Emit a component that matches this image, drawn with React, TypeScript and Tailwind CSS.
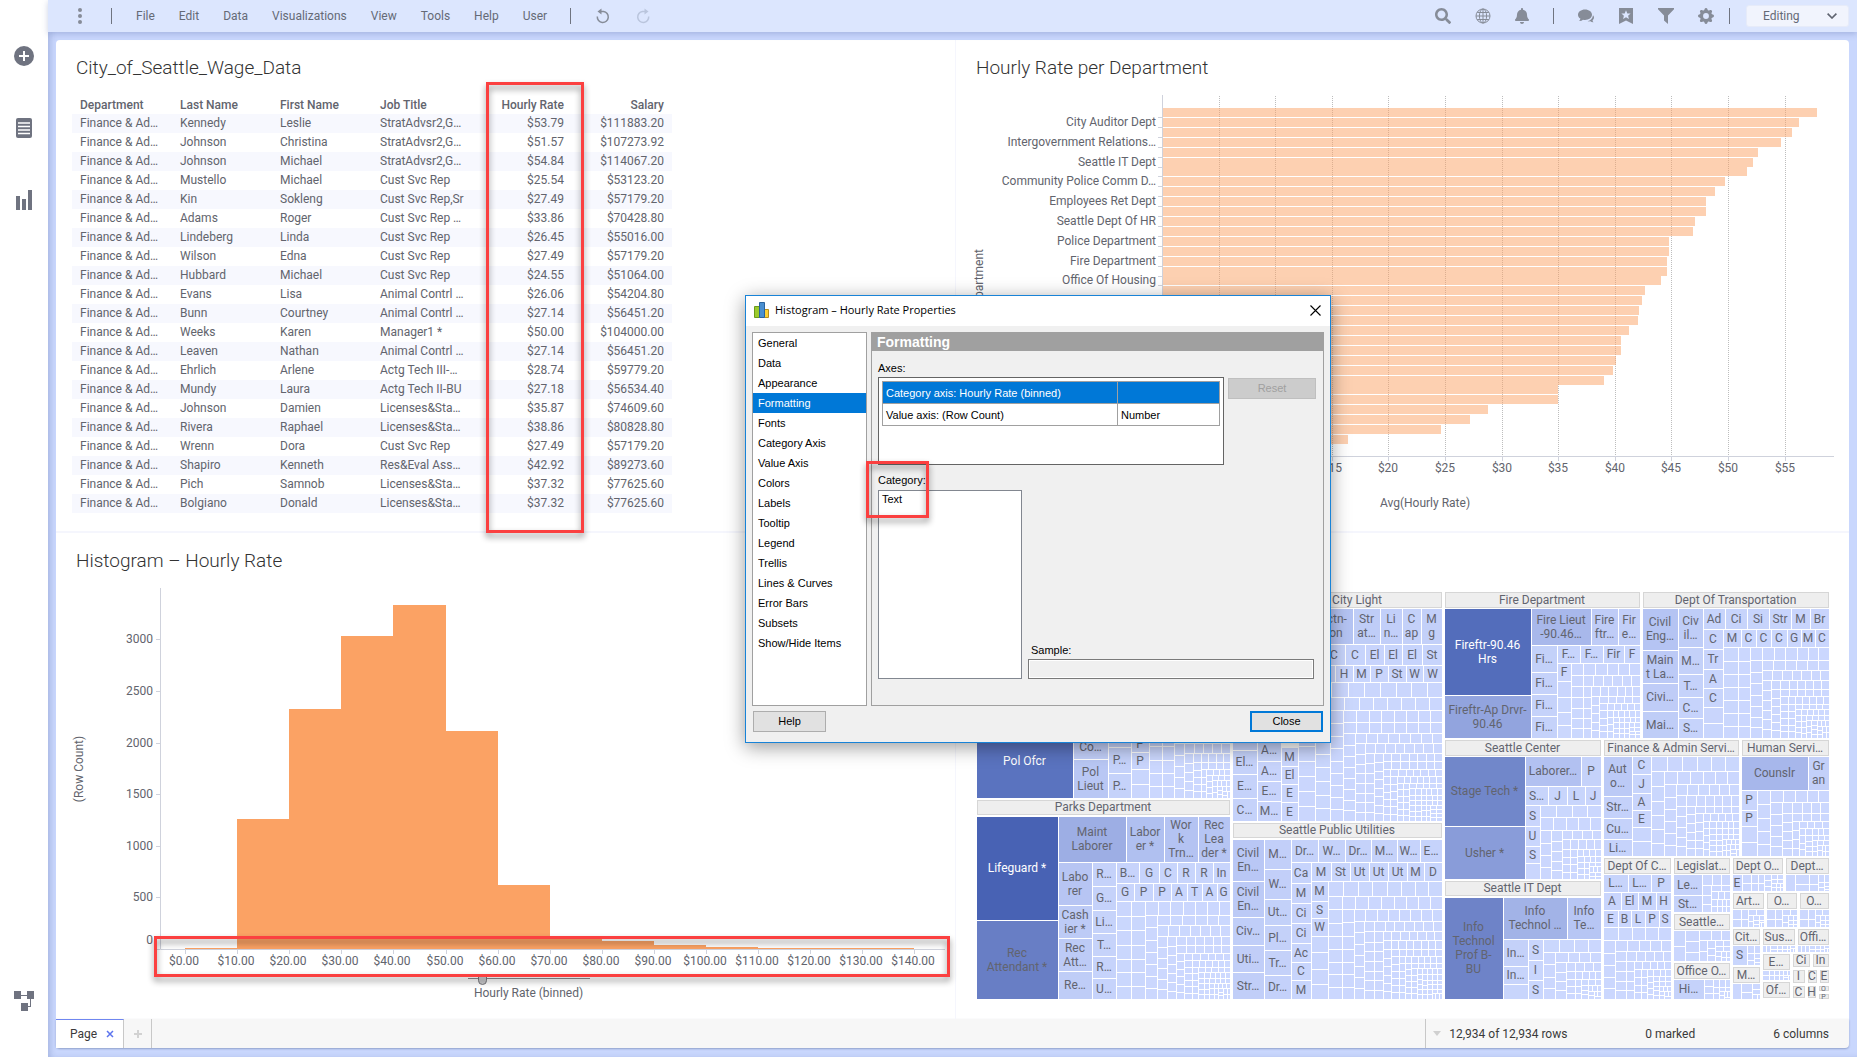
import React from "react";
import { FaSearch, FaBell } from "react-icons/fa";
import { BsGearFill } from "react-icons/bs";

const rows: string[][] = [
  ["Kennedy", "Leslie", "StratAdvsr2,G…", "$53.79", "$111883.20"],
  ["Johnson", "Christina", "StratAdvsr2,G…", "$51.57", "$107273.92"],
  ["Johnson", "Michael", "StratAdvsr2,G…", "$54.84", "$114067.20"],
  ["Mustello", "Michael", "Cust Svc Rep", "$25.54", "$53123.20"],
  ["Kin", "Sokleng", "Cust Svc Rep,Sr", "$27.49", "$57179.20"],
  ["Adams", "Roger", "Cust Svc Rep …", "$33.86", "$70428.80"],
  ["Lindeberg", "Linda", "Cust Svc Rep", "$26.45", "$55016.00"],
  ["Wilson", "Edna", "Cust Svc Rep", "$27.49", "$57179.20"],
  ["Hubbard", "Michael", "Cust Svc Rep", "$24.55", "$51064.00"],
  ["Evans", "Lisa", "Animal Contrl …", "$26.06", "$54204.80"],
  ["Bunn", "Courtney", "Animal Contrl …", "$27.14", "$56451.20"],
  ["Weeks", "Karen", "Manager1 *", "$50.00", "$104000.00"],
  ["Leaven", "Nathan", "Animal Contrl …", "$27.14", "$56451.20"],
  ["Ehrlich", "Arlene", "Actg Tech III-…", "$28.74", "$59779.20"],
  ["Mundy", "Laura", "Actg Tech II-BU", "$27.18", "$56534.40"],
  ["Johnson", "Damien", "Licenses&Sta…", "$35.87", "$74609.60"],
  ["Rivera", "Raphael", "Licenses&Sta…", "$38.86", "$80828.80"],
  ["Wrenn", "Dora", "Cust Svc Rep", "$27.49", "$57179.20"],
  ["Shapiro", "Kenneth", "Res&Eval Ass…", "$42.92", "$89273.60"],
  ["Pich", "Samnob", "Licenses&Sta…", "$37.32", "$77625.60"],
  ["Bolgiano", "Donald", "Licenses&Sta…", "$37.32", "$77625.60"],
];

const TITLE = "text-[19px] leading-6 font-light text-[#333333]";

/* ---------- Icons ---------- */

function GlobeIcon() {
  return (
    <svg viewBox="0 0 16 16" className="size-4" fill="none" stroke="currentColor" strokeWidth="1">
      <circle cx="8" cy="8" r="7" />
      <ellipse cx="8" cy="8" rx="3.6" ry="7" />
      <path d="M8 1v14M1 8h14M2.2 4.5h11.6M2.2 11.5h11.6" />
    </svg>
  );
}

function ChatIcon() {
  return (
    <svg viewBox="0 0 16 16" className="size-4" fill="currentColor">
      <path d="M7 1.5c3.9 0 7 2.3 7 5.2s-3.100 5.200-7 5.200c-.7 0-1.400-.1-2-.2-1 .9-2.400 1.300-3.800 1.200.7-.7 1.100-1.500 1.200-2.300C.9 9.700 0 8.300 0 6.700c0-2.900 3.100-5.200 7-5.200z" />
      <path d="M15 7.200c.6.700 1 1.500 1 2.400 0 1.100-.6 2.100-1.500 2.800.1.700.5 1.300 1 1.800-1.200.1-2.300-.2-3.100-.9-.9.200-1.900.2-2.800 0 2.800-.7 5-2.700 5.400-6.100z" />
    </svg>
  );
}

function BookmarkIcon() {
  return (
    <svg viewBox="0 0 14 16" className="h-4 w-3.5" fill="currentColor" fillRule="evenodd">
      <path d="M0 0h14v16l-7-3.500L0 16zM7 2.300L5.700 5.400l-3.300.2 2.500 2.200-.8 3.200L7 9.300l2.900 1.700-.8-3.200 2.500-2.200-3.300-.2z" />
    </svg>
  );
}

function FilterIcon() {
  return (
    <svg viewBox="0 0 16 16" className="size-4" fill="currentColor">
      <path d="M0 0h16v1.200L10 7.500V16l-4-3.500v-5L0 1.200z" />
    </svg>
  );
}

function UndoIcon() {
  return (
    <svg viewBox="0 0 14 16" className="h-4 w-3.5" fill="none" stroke="currentColor" strokeWidth="1.500">
      <path d="M4 3.500h3.500a5.500 5.500 0 1 1-6.200 5" />
      <path d="M5.500.4v6L1.500 3.400z" fill="currentColor" stroke="none" />
    </svg>
  );
}

/* ---------- Shell ---------- */

function Separator() {
  return <span className="h-4 w-px bg-[#6f7480]" />;
}

function Header() {
  const menus = ["File", "Edit", "Data", "Visualizations", "View", "Tools", "Help", "User"];
  return (
    <header className="relative z-10 flex h-8 shrink-0 items-center justify-between bg-[#dce6fe] pr-2 text-xs text-[#656a76] shadow-[0_2px_6px_rgba(80,100,160,0.300)]">
      <div className="flex items-center pl-[30px]">
        <button type="button" aria-label="More" className="flex h-4 w-1 flex-col justify-between">
          <i className="size-1 rounded-full bg-[#868c98]" />
          <i className="size-1 rounded-full bg-[#868c98]" />
          <i className="size-1 rounded-full bg-[#868c98]" />
        </button>
        <div className="ml-[29px] flex">
          <Separator />
        </div>
        <nav className="ml-6 flex gap-6">
          {menus.map((m) => (
            <button type="button" key={m}>
              {m}
            </button>
          ))}
        </nav>
        <div className="ml-[23px] flex">
          <Separator />
        </div>
        <button type="button" aria-label="Undo" className="ml-[25px] text-[#868c98]">
          <UndoIcon />
        </button>
        <button type="button" aria-label="Redo" className="ml-[26px] -scale-x-100 text-[#bac5dd]">
          <UndoIcon />
        </button>
      </div>
      <div className="flex items-center text-[#868c98]">
        <div className="flex items-center gap-6">
          <button type="button" aria-label="Search"><FaSearch className="size-4" /></button>
          <button type="button" aria-label="Language"><GlobeIcon /></button>
          <button type="button" aria-label="Notifications"><FaBell className="h-4 w-3.5" /></button>
          <Separator />
          <button type="button" aria-label="Comments"><ChatIcon /></button>
          <button type="button" aria-label="Bookmarks" className="px-px"><BookmarkIcon /></button>
          <button type="button" aria-label="Filters"><FilterIcon /></button>
          <button type="button" aria-label="Settings"><BsGearFill className="size-4" /></button>
        </div>
        <div className="mr-4 ml-[15px] flex">
          <Separator />
        </div>
        <div className="relative">
          <select
            aria-label="Mode"
            className="h-[22px] w-[103px] appearance-none rounded-[3px] border border-[#e6ebf9] bg-[#f1f4fd] pl-4 text-xs text-[#656a76]"
          >
            <option>Editing</option>
          </select>
          <svg viewBox="0 0 10 6" className="pointer-events-none absolute top-2 right-3 h-1.5 w-2.5" fill="none" stroke="#5f6470" strokeWidth="1.600">
            <path d="M.6.600L5 5l4.400-4.400" />
          </svg>
        </div>
      </div>
    </header>
  );
}

function Sidebar() {
  return (
    <aside className="flex w-12 shrink-0 flex-col items-center bg-white pt-[46px] pb-[46px] text-[#6f7380]">
      <button type="button" aria-label="Add">
        <svg viewBox="0 0 20 20" className="size-5">
          <circle cx="10" cy="10" r="10" fill="currentColor" />
          <path d="M10 5v10M5 10h10" stroke="#fff" strokeWidth="2" />
        </svg>
      </button>
      <button type="button" aria-label="Data" className="mt-[52px]">
        <svg viewBox="0 0 16 20" className="h-5 w-4">
          <rect width="16" height="20" rx="2" fill="currentColor" />
          <path d="M2 5h12M2 8.500h12M2 12h12M2 15.500h12" stroke="#fff" strokeWidth="1.500" />
        </svg>
      </button>
      <button type="button" aria-label="Visualizations" className="mt-[52px]">
        <svg viewBox="0 0 16 20" className="h-5 w-4" fill="currentColor">
          <path d="M0 6h4v14H0zM6 9h4v11H6zM12 0h4v20h-4z" />
        </svg>
      </button>
      <button type="button" aria-label="Data canvas" className="mt-auto">
        <svg viewBox="0 0 20 20" className="size-5" fill="currentColor">
          <path d="M0 0h7v8H0zM13 0h7v8h-7zM7 12h7v8H7zM7 4h6v1H7zM16 8h1v8h-3v-1h2z" />
        </svg>
      </button>
    </aside>
  );
}

/* ---------- Table ---------- */

function WageTable() {
  return (
    <section className="relative border-r border-b-2 border-[#f5f6fd] pt-4 pl-4">
      <h2 className={`${TITLE} pl-1`}>City_of_Seattle_Wage_Data</h2>
      <table className="mt-[17px] w-[600px] table-fixed border-collapse text-xs leading-[19px] text-[#62646d]">
        <thead className="leading-[17px]">
          <tr>
            {["Department", "Last Name", "First Name", "Job Title", "Hourly Rate", "Salary"].map((h, i) => (
              <th key={h} scope="col" className={i > 3 ? "p-0 px-2 text-right font-medium whitespace-nowrap" : "p-0 px-2 text-left font-medium whitespace-nowrap"}>
                {h}
              </th>
            ))}
          </tr>
        </thead>
        <tbody>
          {rows.map((r, i) => (
            <tr key={i} className="odd:bg-[#f7f8fe]">
              <td className="p-0 pl-2 whitespace-nowrap">Finance &amp; Ad…</td>
              {r.map((c, j) => (
                <td key={j} className={j > 2 ? "p-0 pr-2 text-right whitespace-nowrap" : "p-0 pl-2 whitespace-nowrap"}>
                  {c}
                </td>
              ))}
            </tr>
          ))}
        </tbody>
      </table>
      <div className="absolute top-[42px] left-[430px] h-[451px] w-[98px] border-[3px] border-[#fb4040] drop-shadow-[0_4px_3px_rgba(0,0,0,0.450)]" />
    </section>
  );
}

/* ---------- Bar chart ---------- */

const barEnds = [
  1817, 1799, 1792, 1781, 1758, 1753, 1747, 1725, 1715, 1706, 1706, 1695, 1693, 1669, 1669, 1667, 1667, 1661, 1645,
  1642, 1639, 1638, 1629, 1621, 1621, 1616, 1613, 1604, 1558, 1558, 1488, 1470, 1441, 1348,
];
const deptLabels = [
  "City Auditor Dept",
  "Intergovernment Relations…",
  "Seattle IT Dept",
  "Community Police Comm D…",
  "Employees Ret Dept",
  "Seattle Dept Of HR",
  "Police Department",
  "Fire Department",
  "Office Of Housing",
];

function DepartmentChart() {
  const top = (i: number) => Math.round(108 + (i * 327) / 33);
  return (
    <section className="flex min-h-0 flex-col border-b-2 border-[#f5f6fd] pt-4">
      <h2 className={`${TITLE} pl-5`}>Hourly Rate per Department</h2>
      <svg viewBox="956 80 893 451" preserveAspectRatio="xMinYMin meet" className="min-h-0 w-full flex-1" fill="#62646d" fontSize="12">
        {Array.from({ length: 11 }, (_, i) => {
          const x = Math.round(1162 + (i + 1) * 56.6) + 0.5;
          return (
            <g key={i}>
              <path d={`M${x} 96V456`} stroke="#bdbdbd" strokeDasharray="1 1" />
              <path d={`M${x} 457v4`} stroke="#cfd2dc" />
              <text x={x - 0.5} y="472" textAnchor="middle">{`$${(i + 1) * 5}`}</text>
            </g>
          );
        })}
        {barEnds.map((end, i) => (
          <g key={i}>
            <rect x="1163" y={top(i)} width={end - 1163} height="9" fill="#fba264" fillOpacity="0.5" />
            <path d={`M1158 ${top(i) + 9.5}h4`} stroke="#cfd2dc" />
          </g>
        ))}
        {deptLabels.map((d, i) => (
          <text key={d} x="1156" y={top(i * 2 + 1) + 8} textAnchor="end">
            {d}
          </text>
        ))}
        <path d="M1162.500 95V456.500H1834" fill="none" stroke="#cfd2dc" />
        <text x="1425" y="507" textAnchor="middle">Avg(Hourly Rate)</text>
        <text transform="translate(983 249) rotate(-90)" textAnchor="end">Department</text>
      </svg>
    </section>
  );
}

/* ---------- Histogram ---------- */

const binTops = [948, 819, 709, 636, 605, 731, 885, 938, 941, 945, 947, 948, 948, 948];

function Histogram() {
  const bx = (i: number) => Math.round(185 + i * 52.1);
  return (
    <section className="relative flex min-h-0 flex-col border-r border-[#f5f6fd] pt-4">
      <h2 className={`${TITLE} pl-5`}>Histogram – Hourly Rate</h2>
      <svg viewBox="56 573 898 400" preserveAspectRatio="xMinYMin meet" className="min-h-0 w-full flex-1" fill="#62646d" fontSize="12">
        {binTops.map((t, i) => (
          <rect key={i} x={bx(i)} y={t} width={bx(i + 1) - bx(i)} height={949 - t} fill="#fba264" />
        ))}
        <path d="M160.500 588V949.500H945" fill="none" stroke="#cfd2dc" />
        {Array.from({ length: 7 }, (_, i) => {
          const y = Math.round(949 - i * 51.6) + 0.5;
          return (
            <g key={i}>
              <path d={`M156 ${y}h4`} stroke="#cfd2dc" />
              <text x="153" y={i === 0 ? 944 : y + 3.5} textAnchor="end">{i * 500}</text>
            </g>
          );
        })}
        {Array.from({ length: 15 }, (_, i) => (
          <g key={i}>
            <path d={`M${bx(i) + 0.5} 950v4`} stroke="#cfd2dc" />
            <text x={bx(i) - 1} y="965" textAnchor="middle">{`$${i * 10}.00`}</text>
          </g>
        ))}
        <text transform="translate(83 769) rotate(-90)" textAnchor="middle">(Row Count)</text>
      </svg>
      <div className="flex w-full flex-col items-center pb-[18px] pl-[46px]">
        <input
          type="range"
          aria-label="Number of bins"
          defaultValue="9"
          className="h-3 w-[122px] appearance-none bg-transparent bg-[linear-gradient(#8a8a8e,#8a8a8e)] bg-[length:100%_1px] bg-[position:0_5px] bg-no-repeat [&::-webkit-slider-thumb]:h-[11px] [&::-webkit-slider-thumb]:w-[9px] [&::-webkit-slider-thumb]:appearance-none [&::-webkit-slider-thumb]:rounded-b-full [&::-webkit-slider-thumb]:border [&::-webkit-slider-thumb]:border-[#77777c] [&::-webkit-slider-thumb]:bg-[#c9c9cc]"
        />
        <div className="text-xs leading-4 text-[#62646d]">Hourly Rate (binned)</div>
      </div>
      <div className="absolute top-[403px] left-[98px] h-[41px] w-[796px] border-[3px] border-[#fb4040] drop-shadow-[0_4px_3px_rgba(0,0,0,0.450)]" />
    </section>
  );
}

/* ---------- Treemap ---------- */

type Cell = [number, number, number, number, string];
type Head = [number, number, number, number, string];
type Region = [number, number, number, number, number, number];

// Expands a run of neighbouring cells: horizontal runs share y, vertical runs share x.
const hRun = (y1: number, y2: number, x0: number, items: [number, string][]): Cell[] =>
  items.map(([x2, label], i) => [i ? items[i - 1][0] : x0, y1, x2, y2, label]);
const vRun = (x1: number, x2: number, y0: number, items: [number, string][]): Cell[] =>
  items.map(([y2, label], i) => [x1, i ? items[i - 1][0] : y0, x2, y2, label]);

const heads: Head[] = [
  [1233, 592, 1442, 608, "Seattle City Light"],
  [1445, 592, 1640, 608, "Fire Department"],
  [1643, 592, 1829, 608, "Dept Of Transportation"],
  [977, 800, 1230, 815, "Parks Department"],
  [1233, 823, 1442, 838, "Seattle Public Utilities"],
  [1445, 740, 1601, 756, "Seattle Center"],
  [1604, 740, 1739, 756, "Finance & Admin Servi…"],
  [1742, 740, 1829, 756, "Human Servi…"],
  [1445, 881, 1601, 896, "Seattle IT Dept"],
  [1604, 858, 1671, 874, "Dept Of C…"],
  [1674, 858, 1730, 874, "Legislat…"],
  [1733, 858, 1783, 874, "Dept O…"],
  [1786, 858, 1829, 874, "Dept…"],
  [1674, 914, 1730, 930, "Seattle…"],
  [1674, 963, 1730, 979, "Office  O…"],
  [1733, 893, 1764, 909, "Art…"],
  [1767, 893, 1797, 909, "O…"],
  [1800, 893, 1829, 909, "O…"],
  [1733, 929, 1760, 945, "Cit…"],
  [1763, 929, 1795, 945, "Sus…"],
  [1798, 929, 1829, 945, "Offi…"],
  [1733, 967, 1760, 983, "M…"],
  [1763, 954, 1790, 970, "E…"],
  [1763, 982, 1790, 998, "Of…"],
  [1793, 954, 1810, 967, "Ci"],
  [1813, 954, 1829, 967, "In"],
  [1793, 970, 1805, 983, "I"],
  [1808, 970, 1817, 983, "C"],
  [1820, 970, 1829, 983, "E"],
  [1793, 986, 1805, 998, "C"],
  [1808, 986, 1816, 998, "H"],
  [1819, 986, 1829, 991, "O"],
  [1819, 994, 1829, 999, "P"],
];

const cells: Cell[] = [
  // Police
  [977, 725, 1074, 799, "Pol Ofcr"],
  ...vRun(1074, 1109, 735, [[760, "Co…"], [799, "Pol|Lieut"]]),
  ...vRun(1109, 1132, 730, [[748, ""], [774, "P…"], [799, "P…"]]),
  ...vRun(1132, 1150, 736, [[753, "P"], [770, "P"], [785, ""], [799, ""]]),
  // Parks
  ...vRun(977, 1059, 817, [[921, "Lifeguard *"], [1000, "Rec|Attendant *"]]),
  ...hRun(817, 863, 1059, [[1127, "Maint|Laborer"], [1165, "Labor|er *"], [1199, "Wor|k|Trn…"], [1231, "Rec|Lea|der *"]]),
  ...vRun(1059, 1093, 863, [[906, "Labo|rer"], [939, "Cash|ier *"], [972, "Rec|Att…"], [1000, "Re…"]]),
  ...vRun(1093, 1117, 863, [[887, "R…"], [911, "G…"], [934, "Li…"], [957, "T…"], [979, "R…"], [1000, "U…"]]),
  ...hRun(863, 884, 1117, [[1140, "B…"], [1160, "G"], [1178, "C"], [1196, "R"], [1214, "R"], [1231, "In"]]),
  ...hRun(884, 902, 1117, [[1135, "G"], [1154, "P"], [1172, "P"], [1188, "A"], [1203, "T"], [1218, "A"], [1231, "G"]]),
  // City Light
  ...hRun(609, 645, 1312, [[1354, "Elctn-|Con"], [1381, "Str|at…"], [1403, "Li|n…"], [1422, "C|ap"], [1443, "M|g"]]),
  ...hRun(645, 666, 1324, [[1346, "C"], [1366, "C"], [1385, "El"], [1403, "El"], [1423, "El"], [1443, "St"]]),
  ...hRun(666, 683, 1318, [[1336, ""], [1354, "H"], [1371, "M"], [1389, "P"], [1407, "St"], [1424, "W"], [1443, "W"]]),
  ...vRun(1233, 1258, 727, [[751, ""], [775, "El…"], [799, "E…"], [822, "C…"]]),
  ...vRun(1258, 1282, 739, [[762, "A…"], [782, "A…"], [802, "E…"], [822, "M…"]]),
  ...vRun(1282, 1299, 748, [[767, "M"], [785, "El"], [803, "E"], [822, "E"]]),
  // Public Utilities
  ...vRun(1233, 1265, 840, [[882, "Civil|En…"], [918, "Civil|En…"], [946, "Civ…"], [973, "Uti…"], [1000, "Str…"]]),
  ...vRun(1265, 1292, 840, [[870, "M…"], [900, "W…"], [926, "Ut…"], [951, "Pl…"], [976, "Tr…"], [1000, "Dr…"]]),
  ...hRun(840, 863, 1292, [[1319, "Dr…"], [1346, "W…"], [1372, "Dr…"], [1398, "M…"], [1421, "W…"], [1443, "E…"]]),
  ...vRun(1292, 1312, 863, [[884, "Ca"], [904, "M"], [924, "Ci"], [944, "Ci"], [963, "Ac"], [981, "C"], [1000, "M"]]),
  ...hRun(863, 882, 1312, [[1332, "M"], [1351, "St"], [1370, "Ut"], [1389, "Ut"], [1408, "Ut"], [1425, "M"], [1443, "D"]]),
  ...vRun(1312, 1329, 882, [[902, "M"], [919, "S"], [937, "W"], [953, ""], [970, ""], [985, ""], [1000, ""]]),
  // Fire
  ...vRun(1445, 1532, 609, [[696, "Fireftr-90.46|Hrs"], [739, "Fireftr-Ap Drvr-|90.46"]]),
  ...hRun(609, 646, 1532, [[1592, "Fire Lieut|-90.46…"], [1619, "Fire|ftr…"], [1641, "Fir|e…"]]),
  ...vRun(1532, 1558, 646, [[673, "Fi…"], [695, "Fi…"], [717, "Fi…"], [739, "Fi…"]]),
  ...hRun(646, 664, 1558, [[1581, "F…"], [1604, "F…"], [1625, "Fir"], [1641, "F"]]),
  ...vRun(1558, 1572, 664, [[682, "F"], [698, ""], [713, ""], [726, ""], [739, ""]]),
  // Transportation
  ...vRun(1643, 1679, 609, [[651, "Civil|Eng…"], [684, "Main|t La…"], [712, "Civi…"], [739, "Mai…"]]),
  ...vRun(1679, 1704, 609, [[648, "Civ|il…"], [675, "M…"], [698, "T…"], [719, "C…"], [739, "S…"]]),
  ...hRun(609, 630, 1704, [[1726, "Ad"], [1748, "Ci"], [1770, "Si"], [1792, "Str"], [1811, "M"], [1830, "Br"]]),
  ...vRun(1704, 1724, 630, [[650, "C"], [670, "Tr"], [689, "A"], [708, "C"], [724, ""], [739, ""]]),
  ...hRun(630, 648, 1724, [[1742, "M"], [1757, "C"], [1772, "C"], [1788, "C"], [1802, "G"], [1816, "M"], [1830, "C"]]),
  // Seattle Center
  ...vRun(1445, 1526, 757, [[827, "Stage Tech *"], [880, "Usher *"]]),
  ...hRun(757, 787, 1526, [[1582, "Laborer…"], [1602, "P"]]),
  ...hRun(787, 806, 1526, [[1549, "S…"], [1568, "J"], [1586, "L"], [1602, "J"]]),
  ...vRun(1526, 1541, 806, [[827, "S"], [847, "U"], [864, "S"], [880, ""]]),
  // Seattle IT
  [1445, 898, 1504, 1000, "Info|Technol|Prof B-|BU"],
  ...hRun(898, 940, 1504, [[1568, "Info|Technol …"], [1602, "Info|Te…"]]),
  ...vRun(1504, 1529, 940, [[967, "In…"], [985, "In…"], [1000, ""]]),
  ...vRun(1529, 1544, 940, [[961, "S"], [981, "I"], [1000, "S"]]),
  // Finance
  ...vRun(1604, 1633, 757, [[797, "Aut|o…"], [819, "Str…"], [840, "Cu…"], [857, "Li…"]]),
  ...vRun(1633, 1652, 757, [[775, "C"], [794, "J"], [811, "A"], [828, "E"], [842, ""], [857, ""]]),
  // Human Services
  ...hRun(757, 791, 1742, [[1809, "Counslr"], [1830, "Gr|an"]]),
  ...vRun(1742, 1758, 791, [[811, "P"], [827, "P"], [843, ""], [857, ""]]),
  // Smaller departments
  ...hRun(875, 893, 1604, [[1629, "L…"], [1652, "L…"], [1672, "P"]]),
  ...hRun(893, 911, 1604, [[1622, "A"], [1639, "El"], [1657, "M"], [1672, "H"]]),
  ...hRun(911, 928, 1604, [[1619, "E"], [1632, "B"], [1646, "L"], [1660, "P"], [1672, "S"]]),
  ...vRun(1674, 1703, 875, [[896, "Le…"], [913, "St…"]]),
  [1674, 980, 1705, 1000, "Hi…"],
  [1733, 875, 1743, 892, "E"],
  [1733, 946, 1748, 966, "S"],
];

// x1, y1, x2, y2, area of the first cell, area of the last cell
const regions: Region[] = [
  [1150, 733, 1231, 799, 190, 18],
  [1117, 902, 1231, 1000, 230, 18],
  [1299, 683, 1443, 822, 270, 22],
  [1329, 882, 1443, 1000, 220, 20],
  [1572, 664, 1641, 739, 150, 20],
  [1724, 648, 1830, 739, 200, 20],
  [1541, 806, 1602, 880, 200, 20],
  [1544, 940, 1602, 1000, 200, 20],
  [1652, 757, 1740, 857, 230, 20],
  [1758, 791, 1830, 857, 190, 20],
  [1604, 928, 1672, 1000, 190, 18],
  [1703, 875, 1731, 913, 110, 22],
  [1674, 931, 1731, 962, 200, 18],
  [1705, 980, 1731, 1000, 70, 14],
  [1743, 875, 1784, 892, 80, 12],
  [1786, 875, 1830, 892, 180, 12],
  [1733, 910, 1765, 928, 90, 12],
  [1767, 910, 1798, 928, 90, 12],
  [1800, 910, 1830, 928, 90, 12],
  [1748, 946, 1761, 966, 60, 20],
  [1763, 946, 1796, 953, 30, 10],
  [1798, 946, 1830, 953, 30, 10],
  [1733, 984, 1761, 1000, 150, 16],
  [1763, 971, 1791, 981, 36, 12],
];

// Squarified layout of a list of areas that shrinks geometrically from a0 to a1.
function squarify([x1, y1, x2, y2, a0, a1]: Region): Cell[] {
  const total = (x2 - x1) * (y2 - y1);
  const n = Math.max(3, Math.round(total / ((a0 - a1) / Math.log(a0 / a1))));
  const raw = Array.from({ length: n }, (_, i) => a0 * Math.pow(a1 / a0, i / (n - 1)));
  const k = total / raw.reduce((s, v) => s + v, 0);
  const areas = raw.map((v) => v * k);
  const out: Cell[] = [];
  let x = x1, y = y1, i = 0;
  while (i < n) {
    const w = x2 - x, h = y2 - y;
    const side = Math.min(w, h);
    let row: number[] = [], sum = 0, best = Infinity;
    while (i < n) {
      const s = sum + areas[i];
      const t = s / side;
      const worst = Math.max(...[...row, areas[i]].map((a) => Math.max(t / (a / t), a / t / t)));
      if (worst > best) break;
      best = worst;
      sum = s;
      row = [...row, areas[i]];
      i++;
    }
    const t = sum / side;
    let p = 0;
    for (const a of row) {
      const l = a / t;
      if (w >= h) out.push([x, y + p, x + t, y + p + l, ""]);
      else out.push([x + p, y, x + p + l, y + t, ""]);
      p += l;
    }
    if (w >= h) x += t;
    else y += t;
  }
  return out.map(([a, b, c, d, s]) => [Math.round(a), Math.round(b), Math.round(c), Math.round(d), s]);
}

const stops: [number, number[]][] = [
  [0, [205, 217, 255]],
  [600, [197, 210, 250]],
  [1300, [186, 200, 245]],
  [2100, [169, 185, 236]],
  [3100, [157, 174, 228]],
  [4100, [140, 159, 219]],
  [5500, [115, 136, 203]],
  [6300, [107, 129, 199]],
  [7500, [84, 110, 188]],
  [8500, [72, 98, 180]],
];

function shade(area: number): string {
  const hi = Math.max(1, stops.findIndex(([s]) => s > area));
  const [s0, c0] = stops[area >= 8500 ? 8 : hi - 1];
  const [s1, c1] = stops[area >= 8500 ? 9 : hi];
  const f = Math.min(1, (area - s0) / (s1 - s0));
  return `rgb(${c0.map((c, i) => Math.round(c + (c1[i] - c) * f)).join(",")})`;
}

function Treemap() {
  const all = [...cells, ...regions.flatMap(squarify)];
  return (
    <section className="flex min-h-0 flex-col pt-10">
      <svg viewBox="956 573 893 446" preserveAspectRatio="xMinYMin meet" className="min-h-0 w-full flex-1" fontSize="12" textAnchor="middle">
        {all.map(([x1, y1, x2, y2, label], i) => {
          const area = (x2 - x1) * (y2 - y1);
          const lines = label ? label.split("|") : [];
          const cy = (y1 + y2 - 1) / 2 + 4 - (lines.length - 1) * 7;
          return (
            <g key={i}>
              <rect x={x1} y={y1} width={Math.max(1, x2 - x1 - 1)} height={Math.max(1, y2 - y1 - 1)} fill={shade(area)} />
              {lines.map((l, j) => (
                <text key={j} x={(x1 + x2 - 2) / 2} y={Math.floor(cy + j * 14)} fill={area > 7000 ? "#ffffff" : "#62646f"}>
                  {l}
                </text>
              ))}
            </g>
          );
        })}
        {heads.map(([x1, y1, x2, y2, label], i) => (
          <g key={i}>
            <rect x={x1 + 0.5} y={y1 + 0.5} width={x2 - x1 - 1} height={y2 - y1 - 1} fill="#eeeeee" stroke="#d6d6d6" />
            <text
              x={(x1 + x2 - 1) / 2}
              y={y2 - y1 < 8 ? y2 : Math.floor((y1 + y2) / 2) + 4}
              fontSize={y2 - y1 < 8 ? 7 : 12}
              fill="#62646f"
            >
              {label}
            </text>
          </g>
        ))}
      </svg>
    </section>
  );
}

/* ---------- Status bar ---------- */

function StatusBar() {
  return (
    <footer className="flex h-[29px] shrink-0 items-stretch rounded-b-sm bg-[#f7f7f7] text-xs text-[#3a3a3a] shadow-[0_1px_2px_rgba(60,80,130,0.400)]">
      <div className="flex items-center border-t border-r border-t-[#6f86f0] border-r-[#c8c8c8] bg-white pr-[9px] pl-3.5">
        <button type="button">Page</button>
        <button type="button" aria-label="Close page" className="ml-[9px] text-[#5c74ee]">
          <svg viewBox="0 0 8 8" className="size-2" fill="none" stroke="currentColor" strokeWidth="1.500">
            <path d="M1 1l6 6M7 1L1 7" />
          </svg>
        </button>
      </div>
      <button type="button" aria-label="Add page" className="flex w-7 items-center justify-center border-r border-[#c8c8c8] text-[#d2d2d2]">
        <svg viewBox="0 0 8 8" className="size-2" stroke="currentColor" strokeWidth="2">
          <path d="M4 0v8M0 4h8" />
        </svg>
      </button>
      <div className="ml-auto flex items-center border-l border-[#c8c8c8] pr-5 pl-[7px]">
        <svg viewBox="0 0 8 5" className="h-[5px] w-2" fill="#d0d0d0">
          <path d="M0 0h8L4 5z" />
        </svg>
        <span className="ml-2 w-[196px]">12,934 of 12,934 rows</span>
        <span className="w-32">0 marked</span>
        <span>6 columns</span>
      </div>
    </footer>
  );
}

/* ---------- Properties dialog ---------- */

function PropertiesDialog() {
  const tabs = [
    "General", "Data", "Appearance", "Formatting", "Fonts", "Category Axis", "Value Axis", "Colors", "Labels",
    "Tooltip", "Legend", "Trellis", "Lines & Curves", "Error Bars", "Subsets", "Show/Hide Items",
  ];
  return (
    <div
      role="dialog"
      aria-label="Histogram – Hourly Rate Properties"
      className="absolute top-[295px] left-[745px] z-20 w-[586px] border border-[#1883d7] bg-[#f0f0f0] font-['Liberation_Sans',sans-serif] text-[11px] leading-5 text-black shadow-[0_4px_18px_rgba(0,0,0,0.400)]"
    >
      <div className="flex h-[30px] items-center bg-white pr-[9px] pb-0.5 pl-2">
        <svg viewBox="0 0 15 16" className="h-4 w-[15px]">
          <path d="M.5 4.500h5v11h-5z" fill="#9ccb2c" stroke="#6c9a1c" />
          <path d="M10.500 7.500h4v8h-4z" fill="#fdd033" stroke="#b98f1a" />
          <path d="M5.500.5h5v15h-5z" fill="#4a8fd0" stroke="#2b639c" />
        </svg>
        <span className="ml-1.5 font-['Open_Sans',sans-serif]">Histogram – Hourly Rate Properties</span>
        <button type="button" aria-label="Close dialog" className="ml-auto">
          <svg viewBox="0 0 11 11" className="size-[11px]" stroke="#000" strokeWidth="1.100">
            <path d="M.5.500l10 10M10.500.500l-10 10" />
          </svg>
        </button>
      </div>
      <div className="mt-1.5 flex h-[374px] gap-1 px-1.5">
        <ul className="w-[115px] shrink-0 border border-[#a0a0a0] bg-white">
          {tabs.map((t) => (
            <li key={t}>
              <button
                type="button"
                className={t === "Formatting" ? "block w-full bg-[#0078d7] pl-[5px] text-left text-white" : "block w-full pl-[5px] text-left"}
              >
                {t}
              </button>
            </li>
          ))}
        </ul>
        <div className="min-w-0 flex-1 border border-[#a0a0a0]">
          <h3 className="h-[18px] bg-[#a0a0a0] pl-[5px] text-sm leading-[19px] font-bold text-white">Formatting</h3>
          <div className="pt-[7px] pr-[7px] pl-1.5">
            <div className="h-[19px]">Axes:</div>
            <div className="flex gap-1">
              <div className="h-[88px] w-[346px] border border-[#646464] bg-white p-[3px]">
                <table className="w-full table-fixed border-collapse">
                  <tbody>
                    <tr className="h-[22px] bg-[#0078d7] text-white">
                      <td className="w-[235px] border border-[#a0a0a0] p-0 pl-[3px]">Category axis: Hourly Rate (binned)</td>
                      <td className="border border-[#a0a0a0] p-0" />
                    </tr>
                    <tr className="h-[22px]">
                      <td className="border border-[#a0a0a0] p-0 pl-[3px]">Value axis: (Row Count)</td>
                      <td className="border border-[#a0a0a0] p-0 pl-[3px]">Number</td>
                    </tr>
                  </tbody>
                </table>
              </div>
              <button type="button" disabled className="mt-px h-[21px] w-[88px] border border-[#bfbfbf] bg-[#cccccc] leading-[19px] text-[#a0a0a0]">
                Reset
              </button>
            </div>
            <div className="mt-[5px]">Category:</div>
            <div className="flex gap-1.5">
              <ul className="h-[189px] w-[144px] border border-[#828790] bg-white pl-[3px] leading-4">
                <li>Text</li>
              </ul>
              <div className="mt-auto w-[286px]">
                <label htmlFor="sample" className="block h-[19px] pl-[3px]">
                  Sample:
                </label>
                <input id="sample" readOnly className="block h-5 w-full border border-[#7a7a7a] bg-[#f0f0f0] shadow-[inset_0_0_0_1px_#fff]" />
              </div>
            </div>
          </div>
        </div>
      </div>
      <div className="flex justify-between px-[7px] pt-[5px] pb-2.5">
        <button type="button" className="h-[21px] w-[73px] border border-[#adadad] bg-[#e1e1e1] leading-[19px]">
          Help
        </button>
        <button type="button" className="h-[21px] w-[73px] border-2 border-[#0078d7] bg-[#e1e1e1] leading-[17px]">
          Close
        </button>
      </div>
      <div className="pointer-events-none absolute top-[165px] left-[120px] h-[57px] w-[63px] border-[3px] border-[#fb4040] drop-shadow-[0_4px_3px_rgba(0,0,0,0.450)]" />
    </div>
  );
}

export default function App() {
  return (
    <div className="relative flex h-screen w-full overflow-hidden bg-white font-['Roboto',sans-serif]">
      <Sidebar />
      <div className="flex min-w-0 flex-1 flex-col bg-[#c9d7fd] shadow-[inset_4px_0_6px_-2px_rgba(80,100,160,0.300)]">
        <Header />
        <main className="flex min-h-0 flex-1 flex-col px-2 pt-2 pb-[9px]">
          <div className="grid min-h-0 flex-1 grid-cols-[900fr_893fr] grid-rows-[493fr_486fr] rounded-t-sm bg-white">
            <WageTable />
            <DepartmentChart />
            <Histogram />
            <Treemap />
          </div>
          <StatusBar />
        </main>
      </div>
      <PropertiesDialog />
    </div>
  );
}
